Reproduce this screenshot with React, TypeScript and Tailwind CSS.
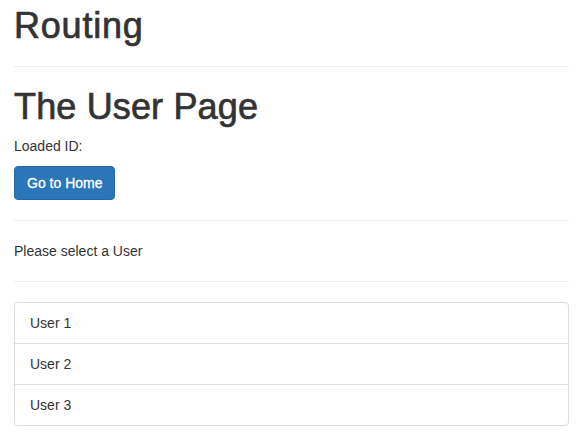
export default function App() {
  const users = ["User 1", "User 2", "User 3"];
  return (
    <div
      className="min-h-[445px] bg-white pl-[14px] pr-[11px] pt-[6px] text-[14px] leading-[20px] text-[#333333]"
      style={{ fontFamily: '"Liberation Sans", Arial, Helvetica, sans-serif' }}
    >
      <h1 className="text-[36px] leading-[40px] font-normal tracking-[0.8px] [-webkit-text-stroke:0.7px_#333333]">Routing</h1>
      <hr className="mt-[20px] border-0 border-t border-[#eeeeee]" />
      <h1 className="mt-[20px] text-[36px] leading-[40px] font-normal tracking-[0.15px] [-webkit-text-stroke:0.7px_#333333]">The User Page</h1>
      <p className="mt-[9px]">Loaded ID:</p>
      <button className="mt-[10px] h-[34px] rounded-[4px] border border-[#2368a8] bg-[#2a76b9] px-[12px] text-[14px] leading-[20px] text-white [-webkit-text-stroke:0.3px_#ffffff]">
        Go to Home
      </button>
      <hr className="mt-[20px] border-0 border-t border-[#eeeeee]" />
      <p className="mt-[20px]">Please select a User</p>
      <hr className="mt-[20px] border-0 border-t border-[#eeeeee]" />
      <ul className="mt-[20px] flex flex-col divide-y divide-[#dddddd] rounded-[4px] border border-[#dddddd]">
        {users.map((u) => (
          <li key={u} className="px-[15px] py-[10px]">
            {u}
          </li>
        ))}
      </ul>
    </div>
  );
}
